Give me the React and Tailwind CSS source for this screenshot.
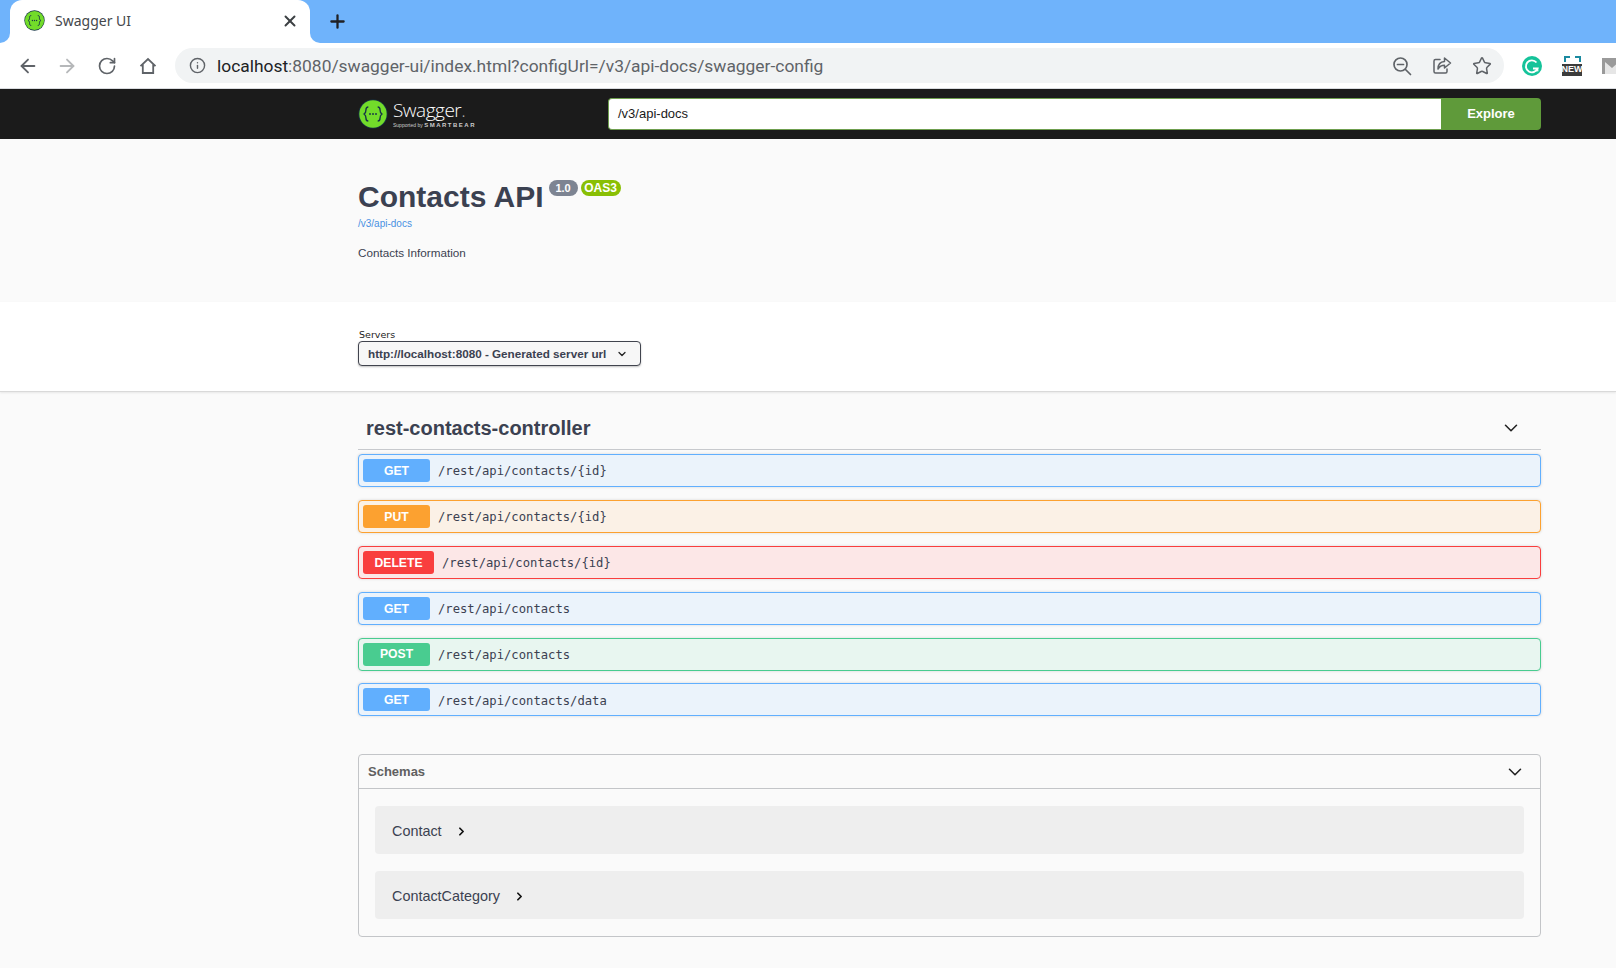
import React from "react";
import { ArrowLeft, ArrowRight, RotateCw, X, Plus, Info, Star, ChevronDown, ChevronRight } from "lucide-react";

function SwaggerMark({ size }) {
  return (
    <svg width={size} height={size} viewBox="0 0 32 32" className="shrink-0">
      <circle cx="16" cy="16" r="15.5" fill="#173647" />
      <circle cx="16" cy="16" r="14.6" fill="#72dc2a" />
      <path d="M11 8.500c-2.400 0-2.500 1.400-2.500 3 0 2.200-.4 3.500-2 4.500 1.600 1 2 2.300 2 4.500 0 1.600.1 3 2.500 3M21 8.500c2.400 0 2.500 1.400 2.500 3 0 2.200.4 3.500 2 4.500-1.600 1-2 2.300-2 4.500 0 1.600-.1 3-2.500 3" fill="none" stroke="#173647" strokeWidth="1.500" />
      <circle cx="12.800" cy="16" r="1" fill="#173647" />
      <circle cx="16" cy="16" r="1" fill="#173647" />
      <circle cx="19.200" cy="16" r="1" fill="#173647" />
    </svg>
  );
}

function Tab() {
  return (
    <div className="relative ml-[10px] flex h-[43px] w-[300px] items-center rounded-t-[12px] bg-white pb-[2px] pl-[14px] pr-[11px]">
      <div className="absolute bottom-0 left-[-10px] h-[10px] w-[10px] bg-white">
        <div className="h-full w-full rounded-br-[10px] bg-[#6fb3fb]" />
      </div>
      <div className="absolute bottom-0 right-[-10px] h-[10px] w-[10px] bg-white">
        <div className="h-full w-full rounded-bl-[10px] bg-[#6fb3fb]" />
      </div>
      <SwaggerMark size={21} />
      <span className="ml-[10px] flex-1 font-['Noto_Sans',sans-serif] text-[14px] text-[#45484c]">Swagger UI</span>
      <X size={18} strokeWidth={2.6} className="text-[#3c4043]" />
    </div>
  );
}

function ShareIcon() {
  return (
    <svg width="20" height="20" viewBox="0 0 20 20" fill="none" stroke="#5f6368" strokeWidth="1.500" strokeLinejoin="round" strokeLinecap="round">
      <path d="M8 3.500H3.500a1.500 1.500 0 0 0-1.500 1.500v10.500A1.500 1.500 0 0 0 3.500 17h10a1.500 1.500 0 0 0 1.500-1.500V13" />
      <path d="M12.500 2l6 5-6 5V9.200C9.500 9.200 7.500 10.500 6 13c0-4.500 2.500-7.200 6.500-7.500z" />
    </svg>
  );
}

function HomeIcon() {
  return (
    <svg width="18" height="18" viewBox="0 0 18 18" fill="none" stroke="#5f6368" strokeWidth="1.800" strokeLinejoin="miter">
      <path d="M1.500 9.200L9 2l7.500 7.200M3.800 7.500V16h10.400V7.500" />
    </svg>
  );
}

function ZoomOutIcon() {
  return (
    <svg width="20" height="20" viewBox="0 0 20 20" fill="none" stroke="#5f6368" strokeWidth="1.700" strokeLinecap="round">
      <circle cx="8.500" cy="8.500" r="6.500" />
      <path d="M5.500 8.500h6M13.500 13.500L18.500 18.500" />
    </svg>
  );
}

function GrammarlyIcon() {
  return (
    <svg width="20" height="20" viewBox="0 0 20 20" className="shrink-0">
      <circle cx="10" cy="10" r="10" fill="#15c39a" />
      <path d="M14.500 6.500A6 6 0 1 0 15.500 12.500H11" fill="none" stroke="#fff" strokeWidth="1.900" />
      <path d="M13 15l2.800-.2-.2-2.800" fill="none" stroke="#fff" strokeWidth="1.200" />
    </svg>
  );
}

function NewBadge() {
  return (
    <div className="flex h-[20px] w-[20px] shrink-0 flex-col items-center justify-between">
      <div className="h-[6px] w-[17px] border-x-2 border-t-2 border-dashed border-[#1b8aa0]" />
      <div className="flex h-[12px] w-full items-center justify-center bg-[#3c3c3c] font-['Liberation_Sans',sans-serif] text-[9px] font-bold leading-none text-white">NEW</div>
    </div>
  );
}

function MailIcon() {
  return (
    <svg width="20" height="16" viewBox="0 0 20 16" className="shrink-0">
      <rect x="0" y="0" width="20" height="16" fill="#9a9a9a" />
      <path d="M3 16V4l7 6 7-6v12z" fill="#e6e6e6" />
    </svg>
  );
}

function Chrome() {
  return (
    <div className="font-['Roboto',sans-serif]">
      <div className="flex h-[43px] items-center bg-[#6fb3fb]">
        <Tab />
        <Plus size={21} strokeWidth={2.6} className="ml-[17px] text-[#202124]" />
      </div>
      <div className="flex h-[46px] items-start overflow-hidden border-b border-[#dadce0] bg-white pt-[5px]">
        <div className="flex h-[35px] w-[175px] shrink-0 items-center pl-[17px]">
          <ArrowLeft size={22} strokeWidth={2} className="text-[#5f6368]" />
          <ArrowRight size={22} strokeWidth={2} className="ml-[17px] text-[#b6b8ba]" />
          <RotateCw size={20} strokeWidth={2} className="ml-[19px] text-[#5f6368]" />
          <div className="ml-[22px]"><HomeIcon /></div>
        </div>
        <div className="flex h-[35px] w-[1329px] shrink-0 items-center rounded-full bg-[#f1f3f4] pl-[14px] pr-[12px]">
          <Info size={17} strokeWidth={2} className="text-[#5f6368]" />
          <div className="ml-[11px] flex-1 whitespace-nowrap pt-[1px] text-[17.400px] text-[#5f6368]">
            <span className="text-[#202124]">localhost</span>:8080/swagger-ui/index.html?configUrl=/v3/api-docs/swagger-config
          </div>
          <div className="flex items-center gap-[20px]">
            <ZoomOutIcon />
            <ShareIcon />
            <Star size={20} strokeWidth={1.800} className="text-[#5f6368]" />
          </div>
        </div>
        <div className="flex h-[35px] shrink-0 items-center gap-[20px] pl-[18px]">
          <GrammarlyIcon />
          <NewBadge />
          <MailIcon />
        </div>
      </div>
    </div>
  );
}

function Wrap({ children, className }) {
  return <div className={"ml-[358px] w-[1183px] " + (className || "")}>{children}</div>;
}

function Topbar() {
  return (
    <div className="flex h-[50px] items-center bg-[#1b1b1b]">
      <Wrap className="flex items-center">
        <SwaggerMark size={30} />
        <div className="ml-[5px] flex w-[215px] flex-col text-white">
          <span className="font-['Open_Sans',sans-serif] text-[19px] font-light leading-[22px] tracking-[-0.500px]">Swagger<span className="text-[#aaa]">.</span></span>
          <span className="font-['Liberation_Sans',sans-serif] text-[6px] leading-[8px] text-[#ccc]">
            <span className="text-[5px]">Supported by </span><span className="font-bold tracking-[1.500px]">SMARTBEAR</span>
          </span>
        </div>
        <div className="flex h-[32px] flex-1 items-center rounded-l-[4px] border-[1.500px] border-r-0 border-[#6f9f4f] bg-white pl-[9px] text-[13px] text-[#1a1a1a]">/v3/api-docs</div>
        <div className="flex h-[32px] w-[100px] items-center justify-center rounded-r-[4px] bg-[#5f9a3a] text-[13px] font-bold text-white">Explore</div>
      </Wrap>
    </div>
  );
}

function InfoSection() {
  return (
    <div className="h-[163px] bg-[#fafafa] pt-[36px]">
      <Wrap>
        <div className="flex items-start">
          <h1 className="text-[30px] font-bold leading-[44px] text-[#3b4151]">Contacts API</h1>
          <span className="ml-[5px] mt-[5px] flex h-[16px] w-[29px] items-center justify-center rounded-[8px] bg-[#7d8492] text-[11px] font-bold text-white">1.0</span>
          <span className="ml-[3px] mt-[5px] flex h-[16px] w-[40px] items-center justify-center rounded-[8px] bg-[#89bf04] text-[12px] font-bold text-white">OAS3</span>
        </div>
        <div className="mt-[-2px] text-[10px] leading-[14px] text-[#4990e2]">/v3/api-docs</div>
        <div className="mt-[14px] text-[11.700px] leading-[16px] text-[#3b4151]">Contacts Information</div>
      </Wrap>
    </div>
  );
}

function Servers() {
  return (
    <div className="h-[90px] border-b border-[#d9d9d9] bg-white pt-[27px] shadow-[0_1px_2px_rgba(0,0,0,0.08)]">
      <Wrap>
        <div className="pl-[1px] font-['DejaVu_Sans',sans-serif] text-[9.500px] leading-[12px] text-[#222]">Servers</div>
        <div className="flex h-[25px] w-[283px] items-center justify-between rounded-[4px] border-[1.500px] border-[#41444e] bg-[#f7f7f7] pl-[9px] pr-[12px] text-[11.700px] font-bold text-[#3b4151] shadow-[0_1px_2px_rgba(0,0,0,0.25)]">
          <span>http://localhost:8080 - Generated server url</span>
          <ChevronDown size={12} strokeWidth={2.500} className="text-[#222]" />
        </div>
      </Wrap>
    </div>
  );
}

const rowStyles = {
  GET: { row: "border-[#61affe] bg-[#ebf3fb]", badge: "w-[67px] bg-[#61affe]" },
  PUT: { row: "border-[#fca130] bg-[#fbf1e6]", badge: "w-[67px] bg-[#fca130]" },
  DELETE: { row: "border-[#f93e3e] bg-[#fce7e7]", badge: "w-[71px] bg-[#f93e3e]" },
  POST: { row: "border-[#49cc90] bg-[#e8f6f0]", badge: "w-[67px] bg-[#49cc90]" },
};

const rows = [
  ["GET", "/rest/api/contacts/{id}"],
  ["PUT", "/rest/api/contacts/{id}"],
  ["DELETE", "/rest/api/contacts/{id}"],
  ["GET", "/rest/api/contacts"],
  ["POST", "/rest/api/contacts"],
  ["GET", "/rest/api/contacts/data"],
];

function Row({ method, path }) {
  const s = rowStyles[method];
  return (
    <div className={"flex h-[33px] items-center rounded-[4px] border pl-[4px] shadow-[0_0_3px_rgba(0,0,0,0.15)] " + s.row}>
      <span className={"flex h-[23px] items-center justify-center rounded-[3px] pt-[1px] text-[12.200px] font-bold text-white " + s.badge}>{method}</span>
      <span className="ml-[8px] translate-y-[0.500px] font-['DejaVu_Sans_Mono',monospace] text-[12.200px] font-medium text-[#3b4151]">{path}</span>
    </div>
  );
}

function Operations() {
  return (
    <Wrap>
      <div className="flex h-[58px] items-center justify-between border-b border-[#c7c9cd] pl-[8px] pr-[19px] pt-[15px]">
        <h3 className="text-[20px] font-bold text-[#3b4151]">rest-contacts-controller</h3>
        <ChevronDown size={22} strokeWidth={1.700} className="mb-[1px] text-[#222]" />
      </div>
      <div className="mt-[4px] flex flex-col gap-[12.900px]">
        {rows.map((r, i) => (
          <Row key={i} method={r[0]} path={r[1]} />
        ))}
      </div>
    </Wrap>
  );
}

function SchemaRow({ name }) {
  return (
    <div className="flex h-[48px] items-center rounded-[4px] bg-[#eeeeee] pl-[17px] pt-[2px] text-[14.400px] text-[#3b4151]">
      <span>{name}</span>
      <ChevronRight size={13} strokeWidth={3.200} className="ml-[13px] text-[#111]" />
    </div>
  );
}

function Schemas() {
  return (
    <Wrap className="mt-[38px]">
      <div className="h-[183px] rounded-[4px] border border-[#c3c5c8]">
        <div className="flex h-[34px] items-center justify-between border-b border-[#c3c5c8] pl-[9px] pr-[14px]">
          <span className="text-[13px] font-bold text-[#606060]">Schemas</span>
          <ChevronDown size={22} strokeWidth={1.700} className="text-[#222]" />
        </div>
        <div className="flex flex-col gap-[17px] px-[16px] pt-[17px]">
          <SchemaRow name="Contact" />
          <SchemaRow name="ContactCategory" />
        </div>
      </div>
    </Wrap>
  );
}

export default function App() {
  return (
    <div className="h-[968px] overflow-hidden bg-[#fafafa] font-['Liberation_Sans',Arial,sans-serif]">
      <Chrome />
      <Topbar />
      <InfoSection />
      <Servers />
      <Operations />
      <Schemas />
    </div>
  );
}
